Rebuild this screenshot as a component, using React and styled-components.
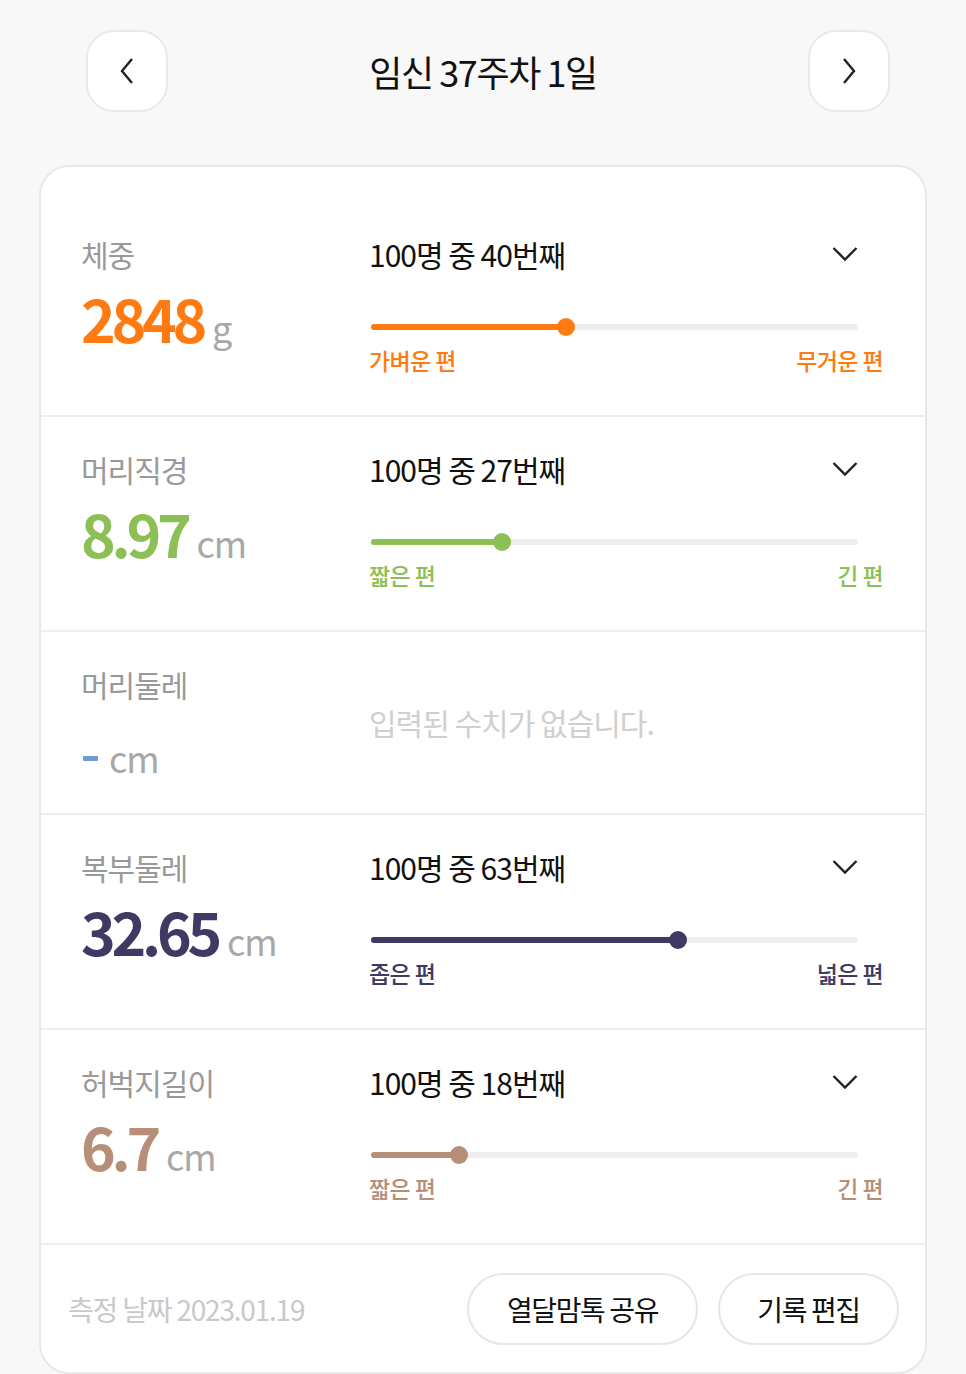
import React from 'react';
import styled, { createGlobalStyle } from 'styled-components';

const GlobalStyle = createGlobalStyle`
  html, body {
    margin: 0;
    padding: 0;
    background: #f8f8f8;
    font-family: "Noto Sans CJK KR", "Noto Sans", sans-serif;
  }
`;

const colors = {
  orange: '#ff7a10',
  green: '#8cbf55',
  navy: '#3e3a63',
  brown: '#b78f78',
  dash: '#6f9bd2',
  label: '#999999',
  unit: '#a8a8a8',
  line: '#eeeeee',
  track: '#eeeeee',
};

const Page = styled.div`
  width: 966px;
  overflow: hidden;
`;

const Header = styled.header`
  display: flex;
  align-items: center;
  padding: 30px 76px 0 86px;
  margin-bottom: 53px;
`;

const NavButton = styled.button`
  width: 82px;
  height: 82px;
  flex: none;
  display: flex;
  align-items: center;
  justify-content: center;
  background: #ffffff;
  border: 2px solid #e9e9e9;
  border-radius: 28px;
  padding: 0;
`;

const Title = styled.h1`
  flex: 1;
  margin: 0 10px 0 0;
  text-align: center;
  font-size: 36px;
  font-weight: 400;
  letter-spacing: -1.4px;
  color: #111111;
`;

const Card = styled.section`
  margin: 0 39px;
  background: #ffffff;
  border: 2px solid #e8e8e8;
  border-radius: 30px;
  padding-top: 35px;
`;

const Row = styled.div`
  display: flex;
  padding: 32px 42px 32px 40px;
  border-bottom: 2px solid ${colors.line};
`;

const Left = styled.div`
  width: 288px;
  flex: none;
`;

const Label = styled.div`
  font-size: 30px;
  line-height: 40px;
  color: ${colors.label};
  letter-spacing: -1px;
`;

const ValueLine = styled.div`
  margin-top: 11px;
  height: 66px;
  font-size: 59px;
  line-height: 66px;
  white-space: nowrap;
`;

const Value = styled.span`
  font-weight: 700;
  letter-spacing: -4.3px;
  color: ${p => p.color};
`;

const Unit = styled.span`
  margin-left: 9px;
  font-size: 36px;
  color: ${colors.unit};
  letter-spacing: -1px;
`;

const Dash = styled.span`
  display: inline-block;
  width: 15px;
  height: 5px;
  border-radius: 1px;
  background: ${colors.dash};
  margin: 0 2px 0 2px;
  transform: translateY(-12px);
`;

const Right = styled.div`
  flex: 1;
  padding-bottom: 8px;
`;

const RankRow = styled.div`
  display: flex;
  align-items: center;
  justify-content: space-between;
  padding-right: 25px;
  height: 40px;
`;

const Rank = styled.span`
  font-size: 30px;
  color: #111111;
  letter-spacing: -1px;
`;

const Track = styled.div`
  position: relative;
  margin: 44px 25px 0 2px;
  height: 18px;
  display: flex;
  align-items: center;

  &::before {
    content: '';
    flex: 1;
    height: 6px;
    border-radius: 3px;
    background: ${colors.track};
  }
`;

const Fill = styled.div`
  position: absolute;
  left: 0;
  top: 6px;
  height: 6px;
  border-radius: 3px;
  background: ${p => p.color};
`;

const Thumb = styled.div`
  position: absolute;
  top: 0;
  width: 18px;
  height: 18px;
  margin-left: -9px;
  border-radius: 50%;
  background: ${p => p.color};
`;

const Scale = styled.div`
  display: flex;
  justify-content: space-between;
  margin-top: 9px;
  font-size: 23px;
  line-height: 30px;
  font-weight: 500;
  letter-spacing: -0.6px;
  color: ${p => p.color};
`;

const Empty = styled.div`
  flex: 1;
  padding-top: 38px;
  font-size: 30px;
  line-height: 40px;
  color: #cfcfcf;
  letter-spacing: -1px;
`;

const Footer = styled.div`
  display: flex;
  align-items: center;
  padding: 28px 26px 27px 27px;
`;

const DateText = styled.div`
  flex: 1;
  font-size: 28px;
  color: #c9c9c9;
  letter-spacing: -1.2px;
`;

const PillButton = styled.button`
  height: 72px;
  width: ${p => p.width}px;
  margin-left: ${p => p.gap || 0}px;
  background: #ffffff;
  border: 2px solid #e6e6e6;
  border-radius: 36px;
  font-family: inherit;
  font-size: 28px;
  color: #111111;
  letter-spacing: -1.4px;
`;

const ChevronLeft = () => (
  <svg width="18" height="30" viewBox="0 0 18 30">
    <path d="M14 3 L4 15 L14 27" fill="none" stroke="#222" strokeWidth="2.4" />
  </svg>
);

const ChevronRight = () => (
  <svg width="18" height="30" viewBox="0 0 18 30">
    <path d="M4 3 L14 15 L4 27" fill="none" stroke="#222" strokeWidth="2.4" />
  </svg>
);

const ChevronDown = () => (
  <svg width="26" height="16" viewBox="0 0 26 16">
    <path d="M1.5 2 L13 13.5 L24.5 2" fill="none" stroke="#222" strokeWidth="2.4" />
  </svg>
);

const metrics = [
  { label: '체중', value: '2848', unit: 'g', rank: 40, color: colors.orange, low: '가벼운 편', high: '무거운 편' },
  { label: '머리직경', value: '8.97', unit: 'cm', rank: 27, color: colors.green, low: '짧은 편', high: '긴 편' },
  { label: '머리둘레', value: null, unit: 'cm' },
  { label: '복부둘레', value: '32.65', unit: 'cm', rank: 63, color: colors.navy, low: '좁은 편', high: '넓은 편' },
  { label: '허벅지길이', value: '6.7', unit: 'cm', rank: 18, color: colors.brown, low: '짧은 편', high: '긴 편' },
];

const MetricRow = ({ label, value, unit, rank, color, low, high }) => (
  <Row>
    <Left>
      <Label>{label}</Label>
      <ValueLine>
        {value ? <Value color={color}>{value}</Value> : <Dash />}
        <Unit>{unit}</Unit>
      </ValueLine>
    </Left>
    {value ? (
      <Right>
        <RankRow>
          <Rank>100명 중 {rank}번째</Rank>
          <ChevronDown />
        </RankRow>
        <Track>
          <Fill color={color} style={{ width: `${rank}%` }} />
          <Thumb color={color} style={{ left: `${rank}%` }} />
        </Track>
        <Scale color={color}>
          <span>{low}</span>
          <span>{high}</span>
        </Scale>
      </Right>
    ) : (
      <Empty>입력된 수치가 없습니다.</Empty>
    )}
  </Row>
);

export default function App() {
  return (
    <Page>
      <GlobalStyle />
      <Header>
        <NavButton aria-label="이전">
          <ChevronLeft />
        </NavButton>
        <Title>임신 37주차 1일</Title>
        <NavButton aria-label="다음">
          <ChevronRight />
        </NavButton>
      </Header>
      <Card>
        {metrics.map(m => (
          <MetricRow key={m.label} {...m} />
        ))}
        <Footer>
          <DateText>측정 날짜 2023.01.19</DateText>
          <PillButton width={231}>열달맘톡 공유</PillButton>
          <PillButton width={181} gap={20}>기록 편집</PillButton>
        </Footer>
      </Card>
    </Page>
  );
}
